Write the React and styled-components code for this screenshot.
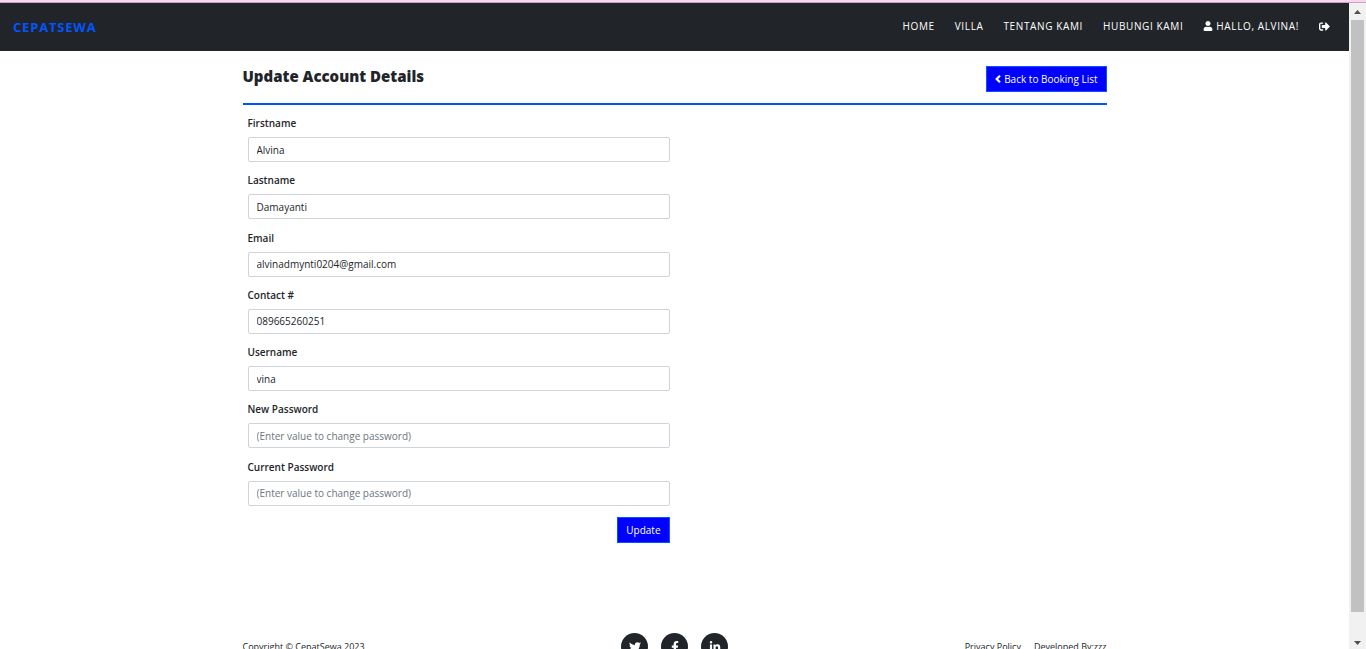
import React from "react";
import styled, { createGlobalStyle } from "styled-components";
import {
  FaUser,
  FaSignOutAlt,
  FaAngleLeft,
  FaTwitter,
  FaFacebookF,
  FaLinkedinIn,
} from "react-icons/fa";

const GlobalStyle = createGlobalStyle`
  *, *::before, *::after { box-sizing: border-box; }
  body {
    margin: 0;
    background: #fff;
    color: #212529;
    font: 400 10px/16px "Open Sans", "Noto Sans", sans-serif;
  }
  button, input { font: inherit; }
`;

const Screen = styled.div`
  display: flex;
  flex-direction: column;
  height: 100vh;
  overflow: hidden;
`;

const TopStrip = styled.div`
  flex: none;
  height: 3px;
  background: #f9d5ef;
  border-bottom: 1px solid #c9a6c0;
`;

const Viewport = styled.div`
  display: flex;
  flex: 1;
  min-height: 0;
`;

const Page = styled.div`
  flex: 1;
  min-width: 0;
  overflow: hidden;
`;

const Navbar = styled.nav`
  display: flex;
  align-items: center;
  justify-content: space-between;
  height: 48px;
  padding: 0 19px 0 13px;
  background: #212529;
`;

const Brand = styled.a`
  color: #0055ff;
  font-size: 13px;
  font-weight: 700;
  letter-spacing: 0.0625em;
  text-decoration: none;
`;

const NavLinks = styled.div`
  display: flex;
  gap: 20px;
  padding-bottom: 2px;
`;

const NavLink = styled.a`
  display: flex;
  align-items: center;
  gap: 3px;
  color: #fff;
  font-weight: 500;
  letter-spacing: 0.0625em;
  text-decoration: none;
`;

const Container = styled.div`
  max-width: 864px;
  margin: 0 auto;
`;

const Heading = styled.header`
  display: flex;
  align-items: flex-start;
  justify-content: space-between;
  padding: 15px 0 11px;
  border-bottom: 2px solid #0055ff;
`;

const Title = styled.h1`
  margin: 0;
  font-size: 15px;
  line-height: 20px;
  font-weight: 800;
`;

const buttonLook = `
  display: flex;
  align-items: center;
  gap: 3px;
  height: 26px;
  padding: 0 8px;
  border: 1px solid #0055ff;
  background: #0000ff;
  color: #fff;
  text-decoration: none;
`;

const ButtonLink = styled.a`
  ${buttonLook}
`;

const BackIcon = styled(FaAngleLeft)`
  width: 6px;
  height: 12px;
  stroke: #fff;
  stroke-width: 16px;
`;

const SubmitButton = styled.button`
  ${buttonLook}
  margin-left: auto;
`;

const Form = styled.form`
  width: 50%;
  padding: 10px 5px 0;
`;

const Fields = styled.div`
  display: grid;
  grid-auto-rows: 1fr;
  min-height: 401px;
  margin-bottom: 1px;
`;

const Field = styled.div`
  display: flex;
  flex-direction: column;
  gap: 6px;
`;

const Label = styled.label`
  font-weight: 600;
`;

const Input = styled.input`
  width: 100%;
  height: 25px;
  padding: 0 8px;
  border: 1px solid #ced4da;
  border-radius: 2px;
  background: #fff;
  color: #212529;
  &::placeholder {
    color: #6c757d;
    opacity: 1;
  }
`;

const Footer = styled.footer`
  display: grid;
  grid-template-columns: 1fr auto 1fr;
  align-items: center;
  padding: 90px 0 24px;
  font-size: 9px;
`;

const Social = styled.div`
  display: flex;
  gap: 13px;
`;

const SocialLink = styled.a`
  display: flex;
  align-items: center;
  justify-content: center;
  width: 27px;
  height: 27px;
  border-radius: 50%;
  background: #212529;
  color: #fff;
  font-size: 12px;
`;

const Legal = styled.div`
  display: flex;
  justify-content: flex-end;
  gap: 13px;
`;

const LegalLink = styled.a`
  color: #212529;
  text-decoration: none;
`;

const Scrollbar = styled.div`
  display: flex;
  flex-direction: column;
  align-items: center;
  flex: none;
  width: 17px;
  background: #f1f1f1;
`;

const ScrollArrow = styled.svg`
  flex: none;
  width: 17px;
  height: 17px;
  fill: #505050;
`;

const ScrollTrack = styled.div`
  flex: 1;
  width: 13px;
  padding-bottom: 20px;
`;

const ScrollThumb = styled.div`
  height: 100%;
  background: #c1c1c1;
`;

const fields = [
  { id: "firstname", label: "Firstname", value: "Alvina" },
  { id: "lastname", label: "Lastname", value: "Damayanti" },
  { id: "email", label: "Email", value: "alvinadmynti0204@gmail.com", type: "email" },
  { id: "contact", label: "Contact #", value: "089665260251" },
  { id: "username", label: "Username", value: "vina" },
  { id: "password", label: "New Password", type: "password", hint: "(Enter value to change password)" },
  { id: "cpassword", label: "Current Password", type: "password", hint: "(Enter value to change password)" },
];

export default function App() {
  return (
    <Screen>
      <GlobalStyle />
      <TopStrip />
      <Viewport>
        <Page>
          <Navbar>
            <Brand href="#">CEPATSEWA</Brand>
            <NavLinks>
              <NavLink href="#">HOME</NavLink>
              <NavLink href="#">VILLA</NavLink>
              <NavLink href="#">TENTANG KAMI</NavLink>
              <NavLink href="#">HUBUNGI KAMI</NavLink>
              <NavLink href="#"><FaUser size={10} />HALLO, ALVINA!</NavLink>
              <NavLink href="#" aria-label="Logout"><FaSignOutAlt size={11} /></NavLink>
            </NavLinks>
          </Navbar>
          <Container>
            <Heading>
              <Title>Update Account Details</Title>
              <ButtonLink href="#"><BackIcon />Back to Booking List</ButtonLink>
            </Heading>
            <Form onSubmit={(e) => e.preventDefault()}>
              <Fields>
                {fields.map((f) => (
                  <Field key={f.id}>
                    <Label htmlFor={f.id}>{f.label}</Label>
                    <Input
                      id={f.id}
                      type={f.type || "text"}
                      defaultValue={f.value}
                      placeholder={f.hint}
                    />
                  </Field>
                ))}
              </Fields>
              <SubmitButton type="submit">Update</SubmitButton>
            </Form>
            <Footer>
              <span>Copyright © CepatSewa 2023</span>
              <Social>
                <SocialLink href="#" aria-label="Twitter"><FaTwitter /></SocialLink>
                <SocialLink href="#" aria-label="Facebook"><FaFacebookF /></SocialLink>
                <SocialLink href="#" aria-label="LinkedIn"><FaLinkedinIn /></SocialLink>
              </Social>
              <Legal>
                <LegalLink href="#">Privacy Policy</LegalLink>
                <LegalLink href="#">Developed By:zzz</LegalLink>
              </Legal>
            </Footer>
          </Container>
        </Page>
        <Scrollbar aria-hidden="true">
          <ScrollArrow viewBox="0 0 17 17"><path d="M5 11h7L8.500 7z" /></ScrollArrow>
          <ScrollTrack><ScrollThumb /></ScrollTrack>
          <ScrollArrow viewBox="0 0 17 17"><path d="M5 9h7L8.500 13z" /></ScrollArrow>
        </Scrollbar>
      </Viewport>
    </Screen>
  );
}
